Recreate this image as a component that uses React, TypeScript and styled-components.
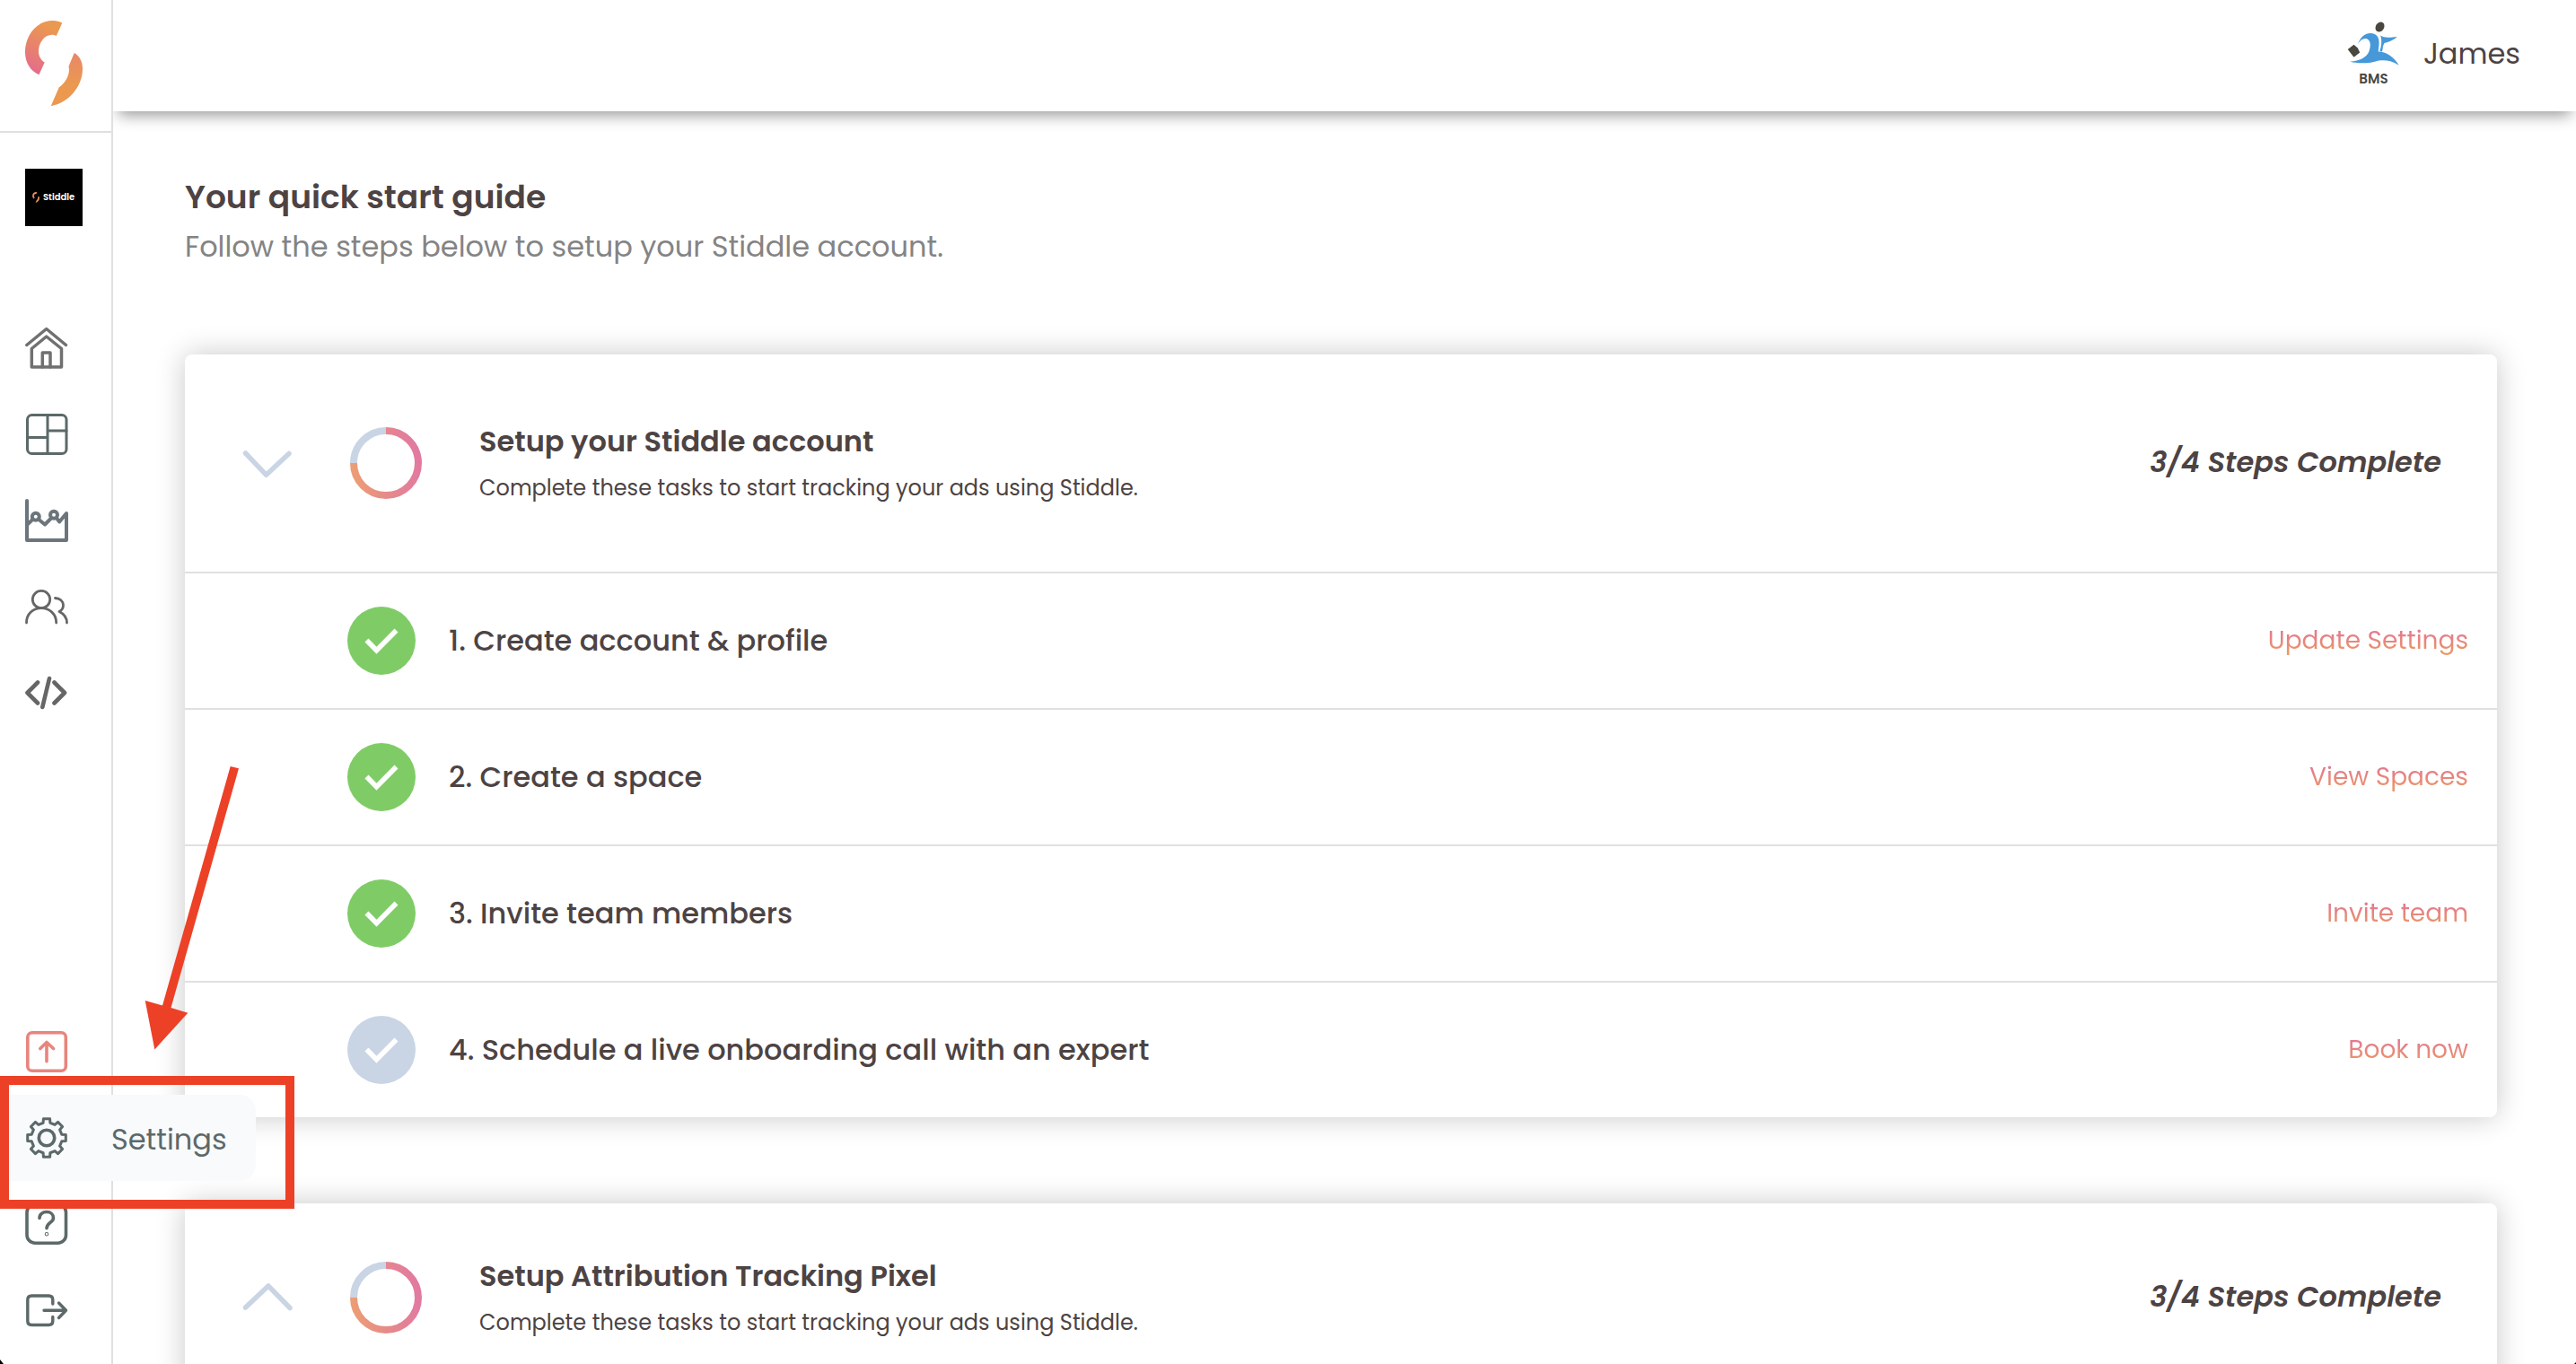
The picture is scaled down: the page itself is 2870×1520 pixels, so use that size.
import React, { useState } from "react";
import styled, { createGlobalStyle } from "styled-components";

const ink = "#4d4343";
const slate = "#5c6969";
const line = "#e0e0e0";
const mist = "#c9d5e4";
const coral = "#e8857d";
const alertRed = "#ec4127";

const GlobalStyle = createGlobalStyle`
  *, *::before, *::after { box-sizing: border-box; }
  body {
    margin: 0;
    background: #fff;
    color: ${ink};
    font-family: Poppins, Inter, "Open Sans", sans-serif;
    font-size: 32px;
    overflow: hidden;
  }
  h1, h2, p, ul, ol { margin: 0; padding: 0; }
  ul, ol { list-style: none; }
  a { color: inherit; text-decoration: none; }
  button { border: 0; padding: 0; background: none; color: inherit; font: inherit; cursor: pointer; }
  svg { display: block; flex: none; }
`;

const Shell = styled.div`
  position: relative;
  display: grid;
  grid-template-columns: 126px minmax(0, 1fr);
  height: 100vh;
`;

const Sidebar = styled.aside`
  position: relative;
  z-index: 2;
  display: flex;
  flex-direction: column;
  border-right: 2px solid ${line};
  padding-bottom: 12px;
  background: #fff;
`;

const BrandLink = styled.a`
  display: flex;
  height: 148px;
  padding: 22px 28px 0;
  border-bottom: 2px solid ${line};
`;

const SpaceBadge = styled.button`
  display: flex;
  align-items: center;
  gap: 4px;
  width: 64px;
  height: 64px;
  margin: 40px 28px 88px;
  padding-left: 8px;
  background: #000;
  color: #fff;
  font-size: 10px;
  font-weight: 600;
`;

const NavList = styled.ul<{ $bottom?: boolean }>`
  margin-top: ${(p) => (p.$bottom ? "auto" : "0")};
`;

const NavLink = styled.a<{ $open?: boolean; $tone: string }>`
  display: flex;
  align-items: center;
  gap: 48px;
  width: ${(p) => (p.$open ? "max-content" : "auto")};
  height: 96px;
  padding: 0 32px 0 28px;
  border-radius: 0 18px 18px 0;
  background: ${(p) => (p.$open ? "#f8fafc" : "transparent")};
  color: ${(p) => p.$tone};
`;

const NavLabel = styled.span`
  padding-top: 4px;
`;

const Page = styled.div`
  display: flex;
  flex-direction: column;
  min-width: 0;
  height: 100vh;
`;

const TopBar = styled.header`
  position: relative;
  z-index: 1;
  display: flex;
  flex: none;
  justify-content: flex-end;
  height: 124px;
  padding: 0 62px 4px 0;
  background: #fff;
  box-shadow: 0 10px 16px -6px rgba(0, 0, 0, 0.42);
`;

const UserButton = styled.button`
  display: flex;
  align-items: center;
  gap: 24px;
`;

const Content = styled.main`
  flex: 1;
  min-height: 0;
  overflow: hidden;
  padding: 72px 88px 0 80px;
`;

const PageTitle = styled.h1`
  font-size: 36px;
  line-height: 48px;
  font-weight: 600;
`;

const PageLead = styled.p`
  margin: 7px 0 96px;
  color: #848484;
  line-height: 48px;
`;

const Card = styled.section`
  margin-bottom: 96px;
  border-radius: 8px;
  background: #fff;
  box-shadow: 0 0 32px rgba(0, 0, 0, 0.22);
`;

const CardHeader = styled.div<{ $open: boolean }>`
  display: flex;
  align-items: center;
  gap: 64px;
  padding: ${(p) => (p.$open ? "69px" : "53px")} 62px ${(p) => (p.$open ? "69px" : "53px")} 64px;
`;

const CardText = styled.div`
  display: flex;
  flex: 1;
  flex-direction: column;
  gap: 4px;
  padding-top: 4px;
`;

const CardTitle = styled.h2`
  font-size: 32px;
  line-height: 48px;
  font-weight: 600;
`;

const CardHint = styled.p`
  font-size: 24px;
  line-height: 48px;
`;

const Progress = styled.em`
  padding-bottom: 2px;
  font-weight: 600;
`;

const StepRow = styled.li`
  display: flex;
  align-items: center;
  gap: 37px;
  height: 152px;
  padding: 0 32px 0 181px;
  border-top: 2px solid ${line};
`;

const StepName = styled.span`
  flex: 1;
  font-weight: 500;
`;

const StepLink = styled.a`
  font-size: 28px;
  line-height: 40px;
  background: linear-gradient(#e27299 10%, #eb9a62 90%);
  background-clip: text;
  color: transparent;
`;

const Highlight = styled.div`
  position: absolute;
  z-index: 3;
  left: 0;
  bottom: 173px;
  width: 328px;
  height: 148px;
  border: 10px solid ${alertRed};
  pointer-events: none;
`;

const Pointer = styled.svg`
  position: absolute;
  z-index: 3;
  left: 160px;
  bottom: 350px;
  pointer-events: none;
`;

const WindowCorner = styled.svg<{ $side: "left" | "right" }>`
  position: absolute;
  z-index: 3;
  ${(p) => p.$side}: 0;
  bottom: 0;
`;

function StiddleMark({ width, height, id }: { width: number; height: number; id: string }) {
  return (
    <svg width={width} height={height} viewBox="0 0 64 97" aria-hidden="true">
      <defs>
        <linearGradient id={`${id}a`} x1="0.3" y1="1" x2="0.6" y2="0.1">
          <stop offset="0" stopColor="#e46c8b" />
          <stop offset="1" stopColor="#eb9850" />
        </linearGradient>
        <linearGradient id={`${id}b`} x1="0.5" y1="0" x2="0.5" y2="0.6">
          <stop offset="0" stopColor="#e88868" />
          <stop offset="1" stopColor="#eb9850" />
        </linearGradient>
      </defs>
      <path
        fill={`url(#${id}a)`}
        d="M41.3 3.5C37.5 1.600 33.500 1 29.500 1C13 1.500 0 17.500 0 36.500C0 47.500 6 57.500 15.500 61.200L21.700 47.500C17.500 45 15 40.500 15 35.300C15 25.500 21.500 17 29.800 16.800C31.800 16.800 33.500 17.300 34.800 18Z"
      />
      <path
        fill={`url(#${id}b)`}
        d="M54.700 37C60.500 40.200 64 46.500 64 54.500C64 74.500 48.500 92.500 28.700 96.200L37.800 75.300C44.500 70.500 49 63 49 55.500L48.500 52Z"
      />
    </svg>
  );
}

const stroke = { fill: "none", stroke: "currentColor", strokeLinecap: "round", strokeLinejoin: "round" } as const;

function Icon({ weight, children }: { weight: number; children: React.ReactNode }) {
  return (
    <svg width="48" height="48" viewBox="0 0 48 48" strokeWidth={weight} aria-hidden="true" {...stroke}>
      {children}
    </svg>
  );
}

const HomeIcon = () => (
  <Icon weight={3.5}>
    <path d="M1.800 20.500L23.700 2.500L45.500 20.500" />
    <path d="M7.300 45V24.500L23.700 11L40.500 24.500V45Z" />
    <path d="M19.300 45V29H28V45" />
  </Icon>
);

const BoardIcon = () => (
  <Icon weight={3}>
    <rect x="2.500" y="2.500" width="43.500" height="43" rx="5" />
    <path d="M25 2.500V45.500M2.500 27.500H25M25 20H46" />
  </Icon>
);

const ChartIcon = () => (
  <Icon weight={4}>
    <path d="M2 2V46H46V16L38.200 25.500L35.500 22M28.500 22L22 28.500L15 22.800M8.500 22.800L2.500 28.500" />
    <circle cx="11.800" cy="19.700" r="4" />
    <circle cx="32" cy="17.700" r="4" />
  </Icon>
);

const PeopleIcon = () => (
  <Icon weight={2.8}>
    <circle cx="18" cy="16" r="9.700" />
    <path d="M1.500 42C1.500 32 9 25.700 18 25.700S34.700 32 34.700 42" />
    <path d="M33.500 14.500C38.500 14.500 42.500 18 42.500 22.500C42.500 25.500 41 28 38 29.500C43 32 46.500 36.500 46.500 42" />
  </Icon>
);

const CodeIcon = () => (
  <Icon weight={4.6}>
    <path d="M14 12.500L2.500 24L14 35.500M32.500 12.500L44 24L32.500 35.500M27 8L19.300 40" />
  </Icon>
);

const UpgradeIcon = () => (
  <Icon weight={3.6}>
    <rect x="2.800" y="2.800" width="42.500" height="42.500" rx="5" />
    <path d="M24 34.800V13.500M16.800 20.500L24 13.500L31.500 20.500" />
  </Icon>
);

const gearPath = (() => {
  const points: string[] = [];
  for (let tooth = 0; tooth < 8; tooth += 1) {
    const corners: [number, number][] = [
      [-13, 17.2],
      [-9.5, 21.6],
      [9.5, 21.6],
      [13, 17.2],
    ];
    corners.forEach(([offset, radius]) => {
      const angle = ((tooth * 45 + offset) * Math.PI) / 180;
      points.push(`${(24 + radius * Math.sin(angle)).toFixed(2)} ${(24 - radius * Math.cos(angle)).toFixed(2)}`);
    });
  }
  return `M${points.join("L")}Z`;
})();

const GearIcon = () => (
  <Icon weight={3}>
    <path d={gearPath} />
    <circle cx="24" cy="24" r="8.700" strokeWidth="3.600" />
  </Icon>
);

const HelpIcon = () => (
  <Icon weight={3.6}>
    <rect x="2" y="2" width="43.500" height="43.200" rx="9" />
    <path d="M16 17.500C16 13 19.500 10.500 24 10.500S31.500 13.500 31.500 17.200C31.500 22.500 24 22.500 24 28.800" />
    <circle cx="24" cy="35.300" r="0.500" />
  </Icon>
);

const LogoutIcon = () => (
  <Icon weight={3.4}>
    <path d="M30.800 17V12.500Q30.800 8 26.300 8H7.300Q2.800 8 2.800 12.500V36Q2.800 40.500 7.300 40.500H26.300Q30.800 40.500 30.800 36V31.500" />
    <path d="M21 24.200H45.500M37.500 16L45.500 24.200L37.500 32.500" />
  </Icon>
);

function BmsLogo() {
  return (
    <svg width="64" height="80" viewBox="0 0 64 80" aria-hidden="true">
      <ellipse cx="39.500" cy="10" rx="4.600" ry="5.800" transform="rotate(35 39.500 10)" fill="#4a473f" />
      <path
        fill="#4698d8"
        d="M14.700 29.300C18 21 23 17 29 17C35 17 38 20.500 38.500 26C39 31 37.500 34.500 37.800 37.500C46 37.500 55 43 60.700 52.700C53 47.500 46 46.500 38 47.500C28 51 15 51 6.300 48.800C17 48 25 44 27.500 37C29.500 31 29.500 26 25.500 23.500C21 22 17.500 25 14.700 29.300Z"
      />
      <path fill="#4698d8" d="M40.300 19.500C44 22.500 51 22 58.700 20.700C55 25 49 26.500 44.500 28C42.500 31 43 34 42 37.500L39.300 37C41.500 31 41.800 25 40.300 19.500Z" />
      <path fill="#4a473f" d="M10.500 29.700L14.800 33.500L17.200 38.500L10.500 43.700L6.800 39L3.700 35Z" />
      <text x="32.500" y="72.500" textAnchor="middle" fontSize="15" fontWeight="600" fill="#4a473f">
        BMS
      </text>
    </svg>
  );
}

const Chevron = ({ up }: { up: boolean }) => (
  <svg width="56" height="32" viewBox="0 0 56 32" strokeWidth="5.500" aria-hidden="true" {...stroke}>
    <path d={up ? "M3.500 27L29 3L53 27.500" : "M3.500 5L26.500 29.200L52 5.500"} />
  </svg>
);

function ProgressRing({ id }: { id: string }) {
  return (
    <svg width="80" height="80" viewBox="0 0 80 80" fill="none" strokeWidth="8" aria-hidden="true">
      <defs>
        <linearGradient id={id} x1="0" y1="0.600" x2="1" y2="0.450">
          <stop offset="0" stopColor="#ec9c76" />
          <stop offset="0.500" stopColor="#e6888c" />
          <stop offset="1" stopColor="#e27aa0" />
        </linearGradient>
      </defs>
      <path d="M40 4A36 36 0 1 1 4 40" stroke={`url(#${id})`} />
      <path d="M4 40A36 36 0 0 1 40 4" stroke={mist} />
    </svg>
  );
}

const ToggleButton = styled.button`
  color: ${mist};
`;

const StepMark = ({ done }: { done: boolean }) => (
  <svg width="76" height="76" viewBox="0 0 76 76" role="img" aria-label={done ? "Done" : "Not done"}>
    <circle cx="38" cy="38" r="38" fill={done ? "#7fcc67" : mist} />
    <path d="M21.500 37.500L32.500 48.800L54.500 26.500" fill="none" stroke="#fff" strokeWidth="5.600" />
  </svg>
);

type Step = { name: string; action: string; done: boolean };

const accountSteps: Step[] = [
  { name: "1. Create account & profile", action: "Update Settings", done: true },
  { name: "2. Create a space", action: "View Spaces", done: true },
  { name: "3. Invite team members", action: "Invite team", done: true },
  { name: "4. Schedule a live onboarding call with an expert", action: "Book now", done: false },
];

const pixelSteps: Step[] = [];

function GuideCard({ id, title, steps, initiallyOpen }: { id: string; title: string; steps: Step[]; initiallyOpen: boolean }) {
  const [open, setOpen] = useState(initiallyOpen);
  return (
    <Card aria-labelledby={`${id}-title`}>
      <CardHeader $open={open}>
        <ToggleButton type="button" aria-expanded={open} aria-labelledby={`${id}-title`} onClick={() => setOpen(!open)}>
          <Chevron up={!open} />
        </ToggleButton>
        <ProgressRing id={`${id}-ring`} />
        <CardText>
          <CardTitle id={`${id}-title`}>{title}</CardTitle>
          <CardHint>Complete these tasks to start tracking your ads using Stiddle.</CardHint>
        </CardText>
        <Progress>3/4 Steps Complete</Progress>
      </CardHeader>
      {open && (
        <ol>
          {steps.map((step) => (
            <StepRow key={step.name}>
              <StepMark done={step.done} />
              <StepName>{step.name}</StepName>
              <StepLink href="#">{step.action}</StepLink>
            </StepRow>
          ))}
        </ol>
      )}
    </Card>
  );
}

const mainNav = [
  { name: "Home", tone: "#707070", icon: <HomeIcon /> },
  { name: "Dashboard", tone: slate, icon: <BoardIcon /> },
  { name: "Reports", tone: "#6c757b", icon: <ChartIcon /> },
  { name: "Audience", tone: "#666666", icon: <PeopleIcon /> },
  { name: "Tracking code", tone: "#666666", icon: <CodeIcon /> },
];

const footNav = [
  { name: "Upgrade", tone: coral, icon: <UpgradeIcon /> },
  { name: "Settings", tone: slate, icon: <GearIcon />, open: true },
  { name: "Help", tone: slate, icon: <HelpIcon /> },
  { name: "Log out", tone: slate, icon: <LogoutIcon /> },
];

export default function App() {
  return (
    <>
      <GlobalStyle />
      <Shell>
        <Sidebar>
          <BrandLink href="#" aria-label="Stiddle">
            <StiddleMark width={64} height={97} id="brand" />
          </BrandLink>
          <SpaceBadge type="button">
            <StiddleMark width={8} height={12} id="space" />
            Stiddle
          </SpaceBadge>
          <NavList>
            {mainNav.map((item) => (
              <li key={item.name}>
                <NavLink href="#" aria-label={item.name} $tone={item.tone}>
                  {item.icon}
                </NavLink>
              </li>
            ))}
          </NavList>
          <NavList $bottom>
            {footNav.map((item) => (
              <li key={item.name}>
                <NavLink href="#" aria-label={item.name} $tone={item.tone} $open={item.open}>
                  {item.icon}
                  {item.open && <NavLabel>{item.name}</NavLabel>}
                </NavLink>
              </li>
            ))}
          </NavList>
        </Sidebar>
        <Page>
          <TopBar>
            <UserButton type="button">
              <BmsLogo />
              James
            </UserButton>
          </TopBar>
          <Content>
            <PageTitle>Your quick start guide</PageTitle>
            <PageLead>Follow the steps below to setup your Stiddle account.</PageLead>
            <GuideCard id="account" title="Setup your Stiddle account" steps={accountSteps} initiallyOpen />
            <GuideCard id="pixel" title="Setup Attribution Tracking Pixel" steps={pixelSteps} initiallyOpen={false} />
          </Content>
        </Page>
        <Pointer width="108" height="318" viewBox="0 0 108 318" fill={alertRed} aria-hidden="true">
          <path d="M96.700 2L106 4.300L30.500 271L49.300 276.700L12.300 317.500L1.700 263L21 268.500Z" />
        </Pointer>
        <Highlight />
        <WindowCorner $side="left" width="4" height="5" viewBox="0 0 4 5" aria-hidden="true">
          <path d="M0 0L4 5H0Z" />
        </WindowCorner>
        <WindowCorner $side="right" width="2" height="2" viewBox="0 0 2 2" aria-hidden="true">
          <path d="M2 0V2H0Z" />
        </WindowCorner>
      </Shell>
    </>
  );
}
